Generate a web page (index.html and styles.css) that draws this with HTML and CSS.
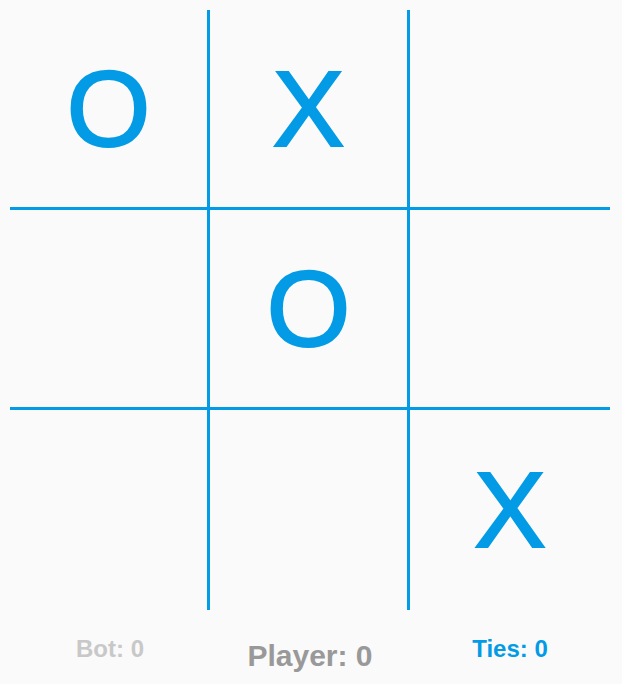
FILE: index.html
```html
<!DOCTYPE html>
<html lang="en">
<head>
<meta charset="utf-8">
<title>Tic Tac Toe</title>
<link rel="stylesheet" href="styles.css">
</head>
<body>
  <main class="game">
    <div class="board">
      <div class="cell">O</div>
      <div class="cell">X</div>
      <div class="cell cell-last-col"></div>
      <div class="cell"></div>
      <div class="cell">O</div>
      <div class="cell cell-last-col"></div>
      <div class="cell cell-last-row"></div>
      <div class="cell cell-last-row"></div>
      <div class="cell cell-last-col cell-last-row">X</div>
    </div>
    <div class="scores">
      <div class="score score-bot">Bot: 0</div>
      <div class="score score-player">Player: 0</div>
      <div class="score score-ties">Ties: 0</div>
    </div>
  </main>
</body>
</html>
```

FILE: styles.css
```css
html, body {
  margin: 0;
  background: #fafafa;
}

body {
  padding: 10px;
  font-family: "Liberation Sans", Arial, sans-serif;
}

.game {
  width: 600px;
}

.board {
  display: grid;
  grid-template-columns: repeat(3, 200px);
  grid-template-rows: repeat(3, 200px);
}

.cell {
  box-sizing: border-box;
  border-right: 3px solid #039be5;
  border-bottom: 3px solid #039be5;
  display: flex;
  align-items: center;
  justify-content: center;
  color: #039be5;
  font-size: 108px;
  line-height: 1;
  -webkit-text-stroke: 2px #039be5;
}

.cell-last-col {
  border-right: none;
}

.cell-last-row {
  border-bottom: none;
}

.scores {
  display: grid;
  grid-template-columns: repeat(3, 200px);
  align-items: start;
}

.score {
  text-align: center;
  font-weight: bold;
  font-size: 24px;
  margin-top: 25px;
}

.score-bot {
  color: #c8c8c8;
}

.score-player {
  color: #999999;
  font-size: 30px;
  margin-top: 29px;
}

.score-ties {
  color: #039be5;
}
```
